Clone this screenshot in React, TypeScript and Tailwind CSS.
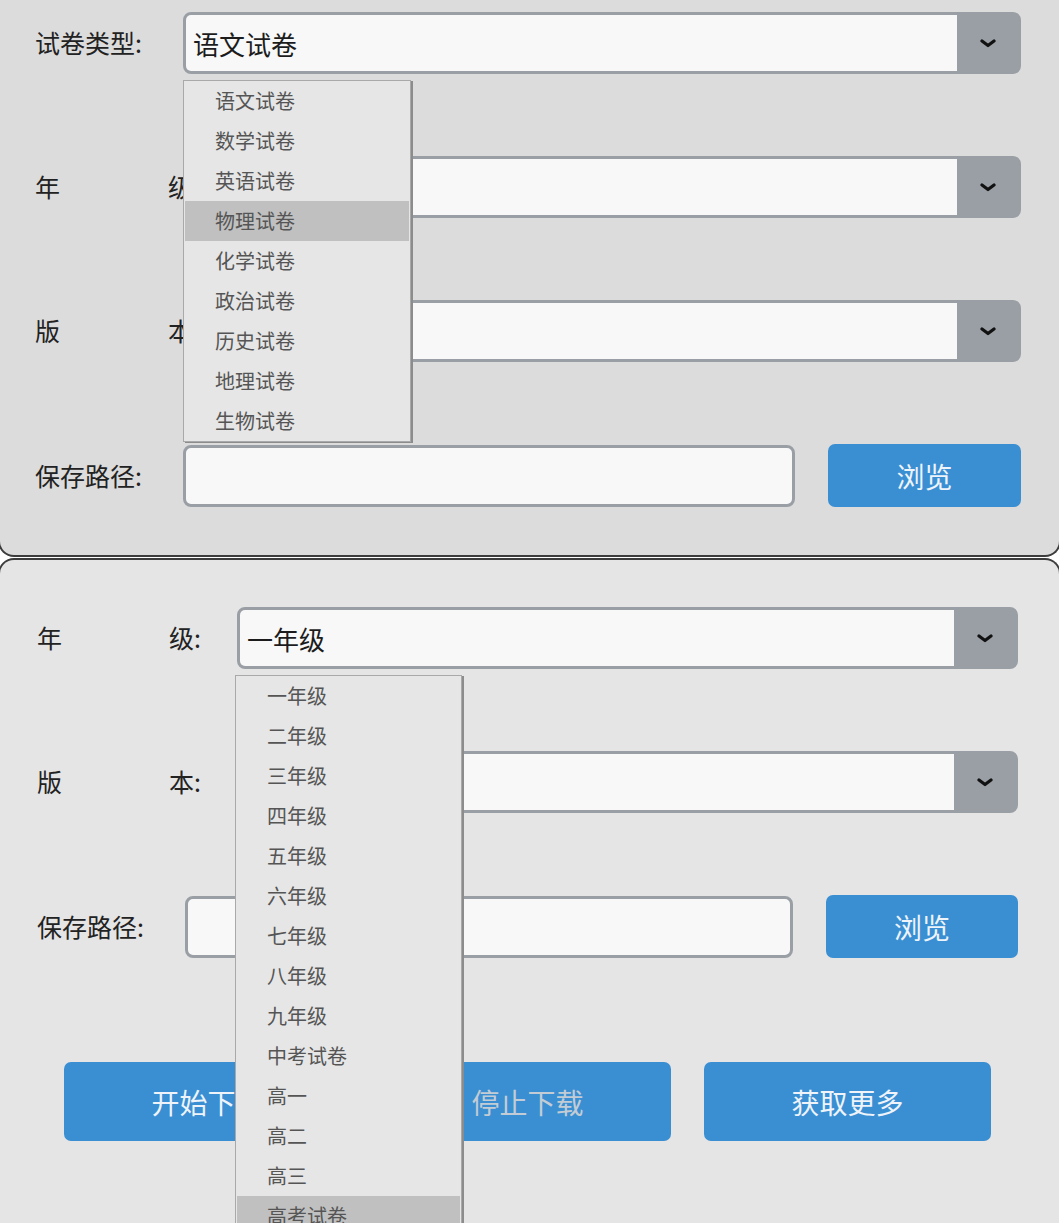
import type { ReactNode } from 'react'

const TYPES = ['语文试卷', '数学试卷', '英语试卷', '物理试卷', '化学试卷', '政治试卷', '历史试卷', '地理试卷', '生物试卷']
const GRADES = ['一年级', '二年级', '三年级', '四年级', '五年级', '六年级', '七年级', '八年级', '九年级', '中考试卷', '高一', '高二', '高三', '高考试卷']

function Chevron() {
  return (
    <svg width="16" height="9" viewBox="0 0 16 9" fill="none">
      <path d="M2 2 L8 6.5 L14 2" stroke="#111" strokeWidth="3.2" strokeLinecap="round" strokeLinejoin="round" />
    </svg>
  )
}

function Select({ value, children }: { value: string; children?: ReactNode }) {
  return (
    <div className="relative flex-1 h-[62px] flex rounded-[8px] border-[3px] border-[#9a9fa5] bg-[#9a9fa5]">
      <div className="flex-1 flex items-center pl-[7px] bg-[#f8f8f8] rounded-l-[5px] text-[26px] text-[#1c1c1c]">{value}</div>
      <div className="w-[61px] flex items-center justify-center">
        <Chevron />
      </div>
      {children}
    </div>
  )
}

function Dropdown({ items, active, className }: { items: string[]; active: number; className: string }) {
  return (
    <div className={`absolute z-10 bg-[#e6e6e6] border border-[#a9a9a9] shadow-[2px_1px_0_#8c8c8c] ${className}`}>
      {items.map((it, i) => (
        <div
          key={it}
          className={`h-[40px] flex items-center text-[20px] text-[#555] ${i === active ? 'bg-[#c0c0c0] mx-[1px] pl-[30px]' : 'pl-[31px]'}`}
        >
          {it}
        </div>
      ))}
    </div>
  )
}

function Spread({ a, b, w }: { a: string; b: string; w: string }) {
  return (
    <div className={`flex justify-between ${w}`}>
      <span>{a}</span>
      <span>{b}</span>
    </div>
  )
}

export default function App() {
  return (
    <div className="w-[1059px] h-[1223px] overflow-hidden bg-white font-['Noto_Sans_CJK_SC','Noto_Sans',sans-serif] text-[25px] text-[#222]">
      {/* 上半部分 */}
      <div className="-mx-[2px] h-[557px] bg-[#dcdcdc] border-2 border-t-0 border-[#3c3c3c] rounded-b-[16px] pl-[35px] pr-[38px] pt-[12px] flex flex-col gap-[82px]">
        <div className="flex items-center">
          <div className="w-[148px] shrink-0">试卷类型:</div>
          <Select value="语文试卷">
            <Dropdown items={TYPES} active={3} className="top-[65px] -left-[3px] w-[228px]" />
          </Select>
        </div>
        <div className="flex items-center">
          <div className="w-[148px] shrink-0">
            <Spread a="年" b="级:" w="w-[165px]" />
          </div>
          <Select value="" />
        </div>
        <div className="flex items-center">
          <div className="w-[148px] shrink-0">
            <Spread a="版" b="本:" w="w-[165px]" />
          </div>
          <Select value="" />
        </div>
        <div className="flex items-center">
          <div className="w-[148px] shrink-0">保存路径:</div>
          <div className="w-[612px] h-[62px] bg-[#f8f8f8] border-[3px] border-[#9a9fa5] rounded-[8px]" />
          <button className="ml-[33px] flex-1 h-[63px] rounded-[7px] bg-[#3a8fd3] text-[28px] text-[#eef4fa]">浏览</button>
        </div>
      </div>

      {/* 下半部分 */}
      <div className="-mx-[2px] mt-[1px] h-[680px] bg-[#e5e5e5] border-2 border-b-0 border-[#3c3c3c] rounded-t-[16px] pl-[37px] pr-[41px] pt-[47px] flex flex-col">
        <div className="flex items-center">
          <div className="w-[200px] shrink-0">
            <Spread a="年" b="级:" w="w-[164px]" />
          </div>
          <Select value="一年级">
            <Dropdown items={GRADES} active={13} className="top-[65px] -left-[5px] w-[227px]" />
          </Select>
        </div>
        <div className="flex items-center mt-[82px]">
          <div className="w-[200px] shrink-0">
            <Spread a="版" b="本:" w="w-[164px]" />
          </div>
          <Select value="" />
        </div>
        <div className="flex items-center mt-[82px]">
          <div className="w-[148px] shrink-0">保存路径:</div>
          <div className="w-[608px] h-[62px] bg-[#f8f8f8] border-[3px] border-[#9a9fa5] rounded-[8px]" />
          <button className="ml-[33px] flex-1 h-[63px] rounded-[7px] bg-[#3a8fd3] text-[28px] text-[#eef4fa]">浏览</button>
        </div>
        <div className="flex gap-[33px] mt-[104px] pl-[27px]">
          <button className="w-[287px] h-[79px] rounded-[7px] bg-[#3a8fd3] text-[28px] text-[#eef4fa]">开始下载</button>
          <button className="w-[287px] h-[79px] rounded-[7px] bg-[#3a8fd3] text-[28px] text-[#c3ccd4]">停止下载</button>
          <button className="w-[287px] h-[79px] rounded-[7px] bg-[#3a8fd3] text-[28px] text-[#eef4fa]">获取更多</button>
        </div>
      </div>
    </div>
  )
}
